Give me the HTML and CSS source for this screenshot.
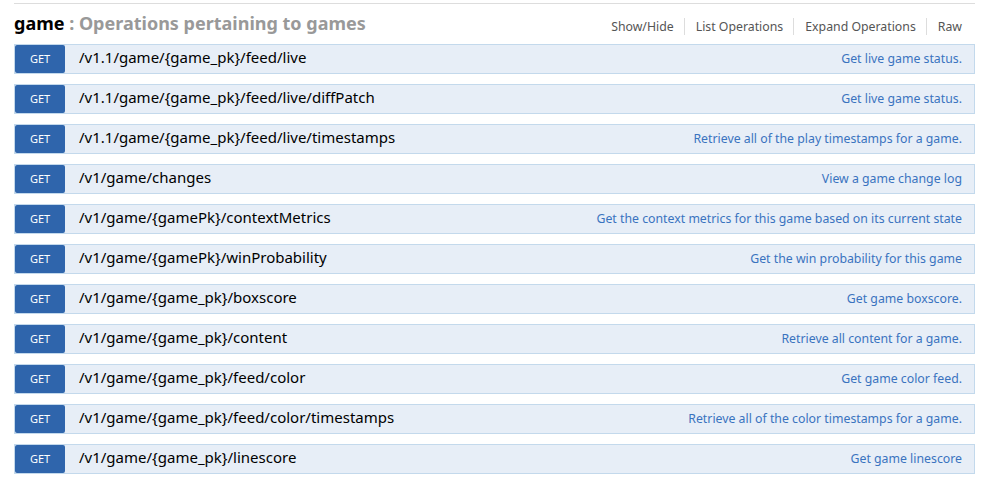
FILE: index.html
```html
<!DOCTYPE html>
<html>
<head>
<meta charset="utf-8">
<link rel="stylesheet" href="styles.css">
</head>
<body>
<div class="resource">
  <div class="heading">
    <h2><span class="name">game</span><span class="desc"> : Operations pertaining to games</span></h2>
    <ul class="options">
      <li>Show/Hide</li>
      <li>List Operations</li>
      <li>Expand Operations</li>
      <li>Raw</li>
    </ul>
  </div>
  <ul class="endpoints">
    <li class="op"><span class="method">GET</span><span class="path">/v1.1/game/{game_pk}/feed/live</span><span class="summary">Get live game status.</span></li>
    <li class="op"><span class="method">GET</span><span class="path">/v1.1/game/{game_pk}/feed/live/diffPatch</span><span class="summary">Get live game status.</span></li>
    <li class="op"><span class="method">GET</span><span class="path">/v1.1/game/{game_pk}/feed/live/timestamps</span><span class="summary">Retrieve all of the play timestamps for a game.</span></li>
    <li class="op"><span class="method">GET</span><span class="path">/v1/game/changes</span><span class="summary">View a game change log</span></li>
    <li class="op"><span class="method">GET</span><span class="path">/v1/game/{gamePk}/contextMetrics</span><span class="summary">Get the context metrics for this game based on its current state</span></li>
    <li class="op"><span class="method">GET</span><span class="path">/v1/game/{gamePk}/winProbability</span><span class="summary">Get the win probability for this game</span></li>
    <li class="op"><span class="method">GET</span><span class="path">/v1/game/{game_pk}/boxscore</span><span class="summary">Get game boxscore.</span></li>
    <li class="op"><span class="method">GET</span><span class="path">/v1/game/{game_pk}/content</span><span class="summary">Retrieve all content for a game.</span></li>
    <li class="op"><span class="method">GET</span><span class="path">/v1/game/{game_pk}/feed/color</span><span class="summary">Get game color feed.</span></li>
    <li class="op"><span class="method">GET</span><span class="path">/v1/game/{game_pk}/feed/color/timestamps</span><span class="summary">Retrieve all of the color timestamps for a game.</span></li>
    <li class="op"><span class="method">GET</span><span class="path">/v1/game/{game_pk}/linescore</span><span class="summary">Get game linescore</span></li>
  </ul>
</div>
</body>
</html>
```

FILE: styles.css
```css
html, body {
  margin: 0;
  padding: 0;
  background: #fff;
  font-family: "Noto Sans", "Open Sans", sans-serif;
}
.resource {
  margin: 3px 6px 0 14px;
  border-top: 1px solid #ddd;
}
.heading {
  display: flex;
  align-items: center;
  justify-content: space-between;
  height: 40px;
}
.heading h2 {
  margin: 0;
  font-size: 18px;
  font-weight: bold;
  line-height: 24px;
  position: relative;
  top: -1px;
}
.heading .name { color: #000; }
.heading .desc { color: #999; }
.options {
  list-style: none;
  margin: 0;
  padding: 0 13px 0 0;
  display: flex;
  position: relative;
  top: 2px;
}
.options li {
  font-size: 12.3px;
  color: #555;
  padding: 0 10px 0 11px;
  line-height: 17px;
  border-right: 1px solid #ddd;
}
.options li:last-child {
  border-right: none;
  padding-right: 0;
}
.endpoints {
  list-style: none;
  margin: 0;
  padding: 0;
  display: flex;
  flex-direction: column;
  gap: 10px;
}
.op {
  display: flex;
  align-items: center;
  height: 28px;
  border: 1px solid #c3d9ec;
  background: #e7eef7;
}
.method {
  width: 50px;
  height: 28px;
  line-height: 28px;
  text-align: center;
  background: #2f65ac;
  color: #fff;
  font-size: 11px;
  border-radius: 2px;
  flex: none;
}
.path {
  margin-left: 14px;
  font-size: 15px;
  color: #000;
  flex: 1;
  position: relative;
  top: -2px;
}
.summary {
  font-size: 12.3px;
  color: #3a73bf;
  padding-right: 12px;
  position: relative;
  top: -1px;
}
```
